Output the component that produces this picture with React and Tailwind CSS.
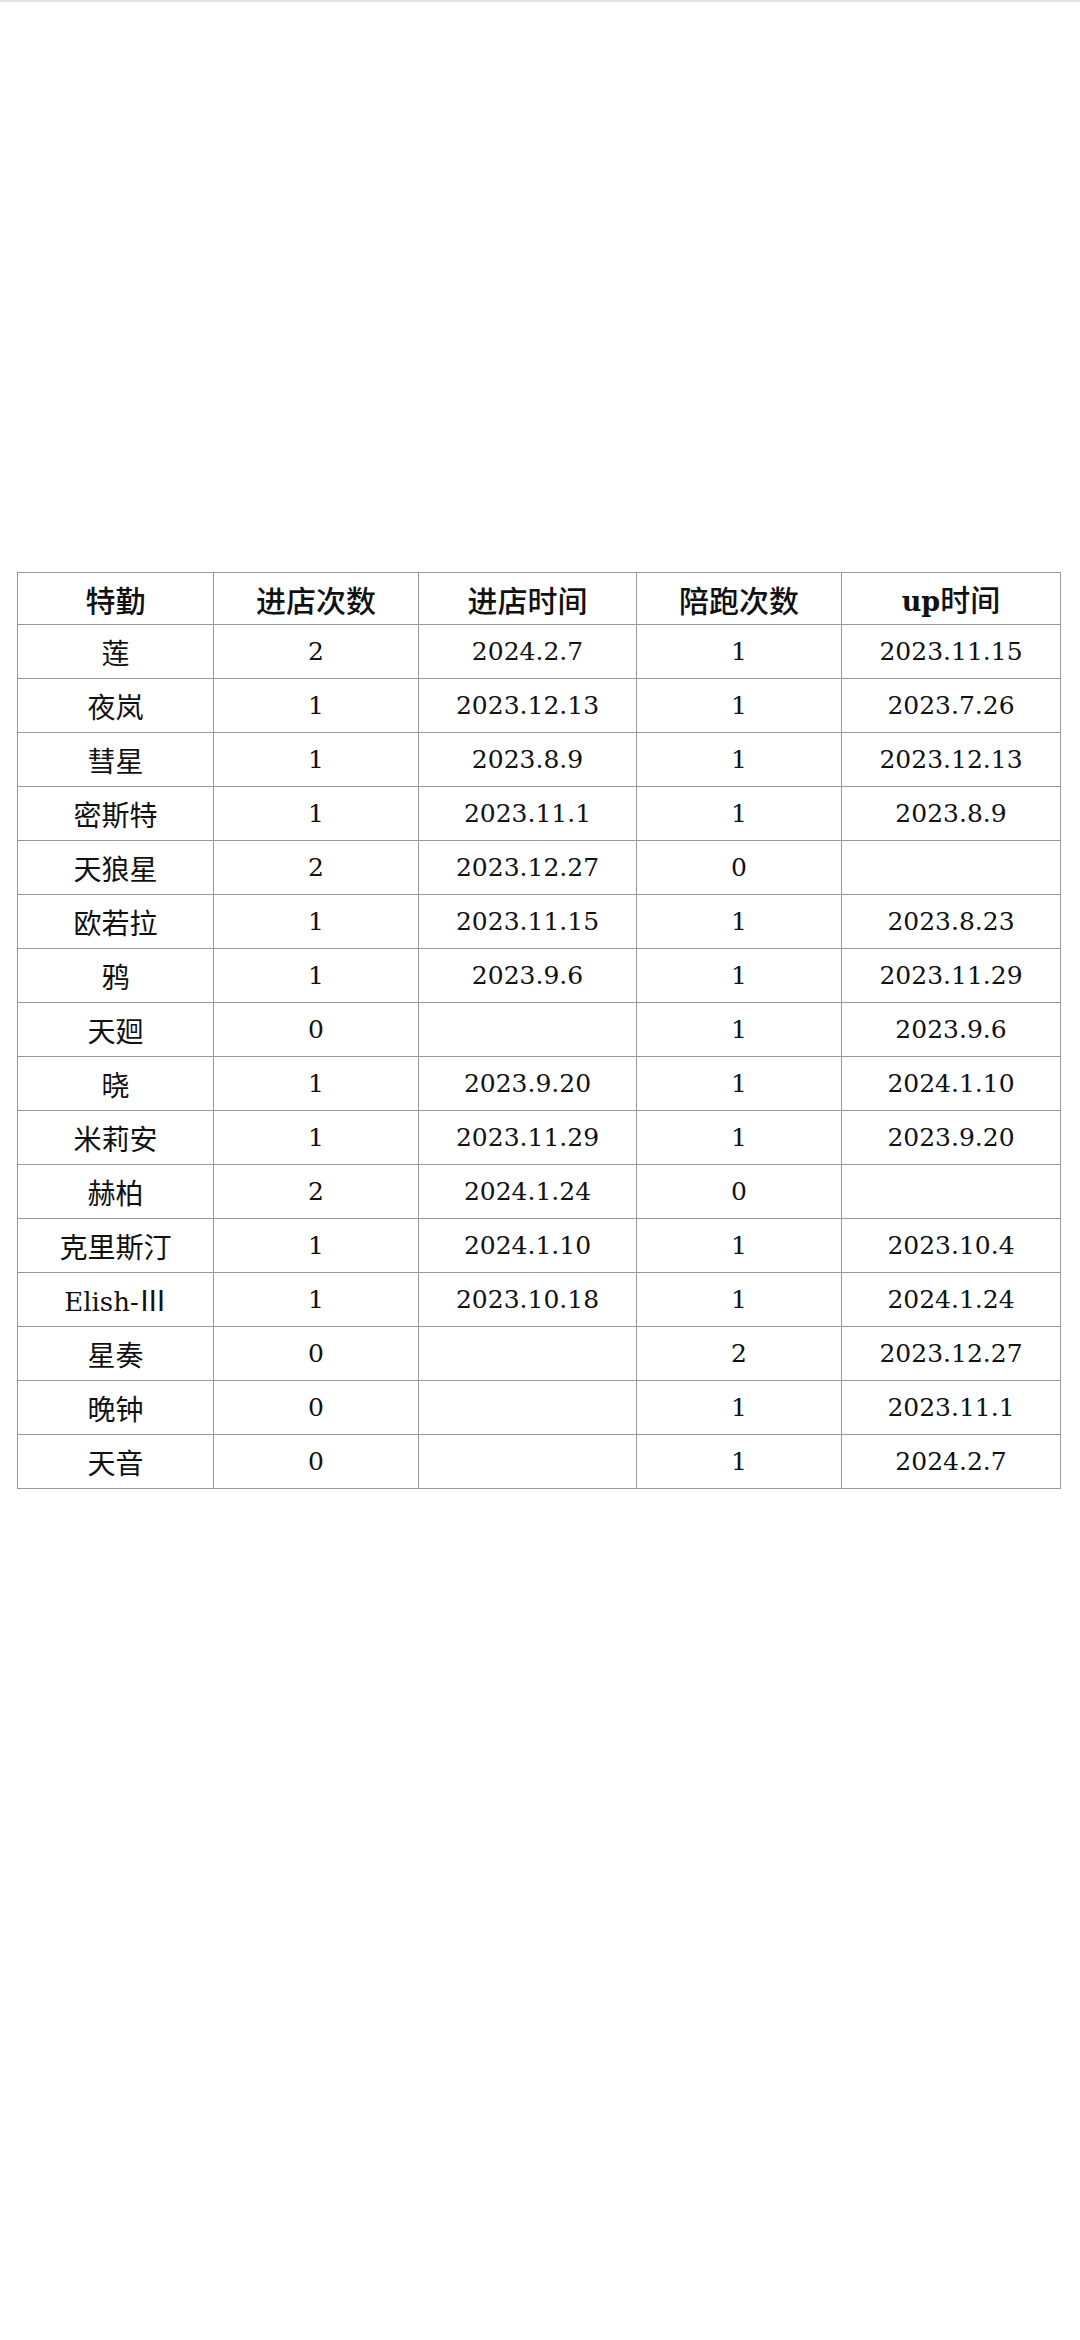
import React from 'react';

const rows = [
  ['莲', '2', '2024.2.7', '1', '2023.11.15'],
  ['夜岚', '1', '2023.12.13', '1', '2023.7.26'],
  ['彗星', '1', '2023.8.9', '1', '2023.12.13'],
  ['密斯特', '1', '2023.11.1', '1', '2023.8.9'],
  ['天狼星', '2', '2023.12.27', '0', ''],
  ['欧若拉', '1', '2023.11.15', '1', '2023.8.23'],
  ['鸦', '1', '2023.9.6', '1', '2023.11.29'],
  ['天廻', '0', '', '1', '2023.9.6'],
  ['晓', '1', '2023.9.20', '1', '2024.1.10'],
  ['米莉安', '1', '2023.11.29', '1', '2023.9.20'],
  ['赫柏', '2', '2024.1.24', '0', ''],
  ['克里斯汀', '1', '2024.1.10', '1', '2023.10.4'],
  ['Elish-Ⅲ', '1', '2023.10.18', '1', '2024.1.24'],
  ['星奏', '0', '', '2', '2023.12.27'],
  ['晚钟', '0', '', '1', '2023.11.1'],
  ['天音', '0', '', '1', '2024.2.7'],
]

const sans = "font-['Noto_Sans_CJK_SC',sans-serif]"
const serif = "font-['DejaVu_Serif','Noto_Sans_CJK_SC',serif]"
const cell = 'border border-[#999]'

const App = () => {
  return (
    <div className="min-h-[2340px] bg-white border-t-2 border-[#e2e2e2] pt-[570px] pl-[17px]">
      <table className="border-collapse text-[#111] text-center">
        <colgroup>
          <col className="w-[196px]" />
          <col className="w-[205px]" />
          <col className="w-[218px]" />
          <col className="w-[205px]" />
          <col className="w-[219px]" />
        </colgroup>
        <thead>
          <tr className="h-[52px]">
            {['特勤', '进店次数', '进店时间', '陪跑次数'].map((h) => (
              <th key={h} className={`${cell} ${sans} text-[30px] font-medium leading-none`}>{h}</th>
            ))}
            <th className={`${cell} ${sans} text-[30px] font-medium leading-none`}>
              <span className={`${serif} font-bold text-[27px]`}>up</span>时间
            </th>
          </tr>
        </thead>
        <tbody>
          {rows.map((r, i) => (
            <tr key={i} className="h-[54px]">
              <td className={`${cell} ${sans} text-[28px] leading-none`}>
                {r[0].startsWith('Elish') ? (
                  <><span className={`${serif} text-[26px]`}>Elish-</span>Ⅲ</>
                ) : r[0]}
              </td>
              <td className={`${cell} ${serif} text-[25px]`}>{r[1]}</td>
              <td className={`${cell} ${serif} text-[25px]`}>{r[2]}</td>
              <td className={`${cell} ${serif} text-[25px]`}>{r[3]}</td>
              <td className={`${cell} ${serif} text-[25px]`}>{r[4]}</td>
            </tr>
          ))}
        </tbody>
      </table>
    </div>
  )
}

export default App
